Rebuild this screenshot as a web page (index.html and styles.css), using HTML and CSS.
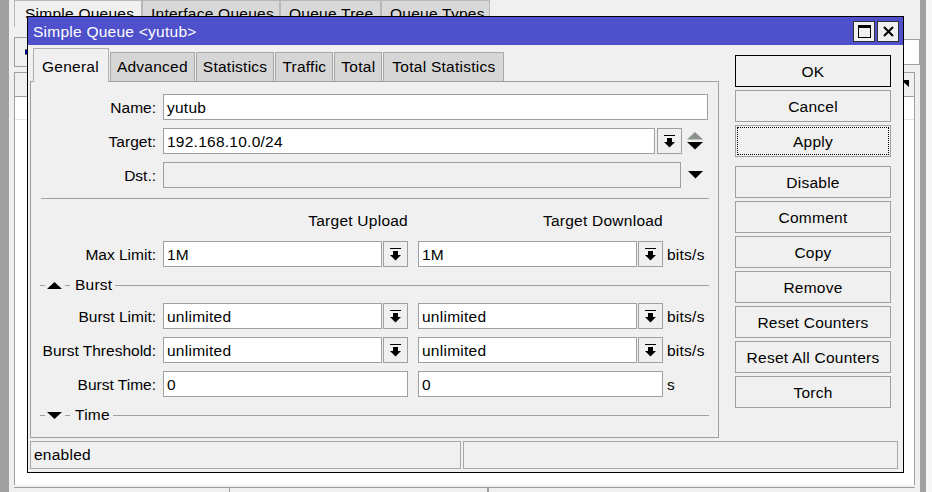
FILE: index.html
```html
<!DOCTYPE html>
<html>
<head>
<meta charset="utf-8">
<title>Simple Queue</title>
<link rel="stylesheet" href="styles.css">
</head>
<body>
<div class="desk">
  <div class="edge-left"></div>
  <div class="mainwin">
    <div class="mw-tabs">
      <div class="mw-tab active t-sq">Simple Queues</div>
      <div class="mw-tab t-iq">Interface Queues</div>
      <div class="mw-tab t-qt">Queue Tree</div>
      <div class="mw-tab t-qy">Queue Types</div>
    </div>
    <div class="mw-body">
      <div class="mw-toolbar">
        <div class="tb-btn">
          <svg width="14" height="14" viewBox="0 0 14 14"><path d="M5 0h4v5h5v4H9v5H5V9H0V5h5z" fill="#0000ff" stroke="#000" stroke-width="1"/></svg>
        </div>
        <div class="tb-fill"></div>
        <div class="tb-find"></div>
      </div>
      <div class="mw-list">
        <div class="mw-head">
          <svg class="corner" width="8" height="7" viewBox="0 0 8 7"><polygon points="0,0 8,0 8,7" fill="#000"/></svg>
        </div>
        <div class="mw-rows">
          <div class="mw-row"></div>
        </div>
      </div>
      <div class="mw-status">
        <div class="mst c1"></div>
        <div class="mst c2"></div>
        <div class="mst c3"></div>
      </div>
    </div>
  </div>
  <div class="edge-right"></div>
  <div class="edge-far"></div>
</div>

<div class="dialog">
  <div class="titlebar">
    <span class="title">Simple Queue &lt;yutub&gt;</span>
    <div class="tbtn">
      <svg width="13" height="13" viewBox="0 0 13 13"><rect x="0.5" y="0.5" width="12" height="12" fill="none" stroke="#000"/><rect x="0" y="0" width="13" height="3" fill="#000"/></svg>
    </div>
    <div class="tbtn">
      <svg width="11" height="11" viewBox="0 0 11 11"><path d="M1 1L10 10M10 1L1 10" stroke="#000" stroke-width="2"/></svg>
    </div>
  </div>
  <div class="dbody">
    <div class="dmain">
      <div class="leftcol">
        <div class="tabs">
          <div class="tab active">General</div>
          <div class="tab">Advanced</div>
          <div class="tab">Statistics</div>
          <div class="tab">Traffic</div>
          <div class="tab">Total</div>
          <div class="tab">Total Statistics</div>
        </div>
        <div class="panel">
          <div class="row">
            <label class="lbl">Name:</label>
            <div class="inp w-full">yutub</div>
          </div>
          <div class="row">
            <label class="lbl">Target:</label>
            <div class="inp w-target">192.168.10.0/24</div>
            <div class="ddbtn"><svg width="11" height="13" viewBox="0 0 11 13"><rect x="0" y="0" width="11" height="1"/><rect x="3" y="3" width="5" height="4"/><polygon points="0,7 11,7 5.5,12.5"/></svg></div>
            <svg class="updown" width="16" height="18" viewBox="0 0 16 18"><polygon points="0,7.5 16,7.5 8,0" fill="#8a928a"/><polygon points="0,10 16,10 8,17.5" fill="#000"/></svg>
          </div>
          <div class="row">
            <label class="lbl">Dst.:</label>
            <div class="inp dis w-dst"></div>
            <svg class="dstarrow" width="15" height="8" viewBox="0 0 15 8"><polygon points="0,0 15,0 7.5,7.5" fill="#000"/></svg>
          </div>
          <div class="sep"></div>
          <div class="row hdr">
            <div class="colhead">Target Upload</div>
            <div class="colhead">Target Download</div>
          </div>
          <div class="row">
            <label class="lbl">Max Limit:</label>
            <div class="combo"><div class="inp w-combo">1M</div><div class="ddbtn"><svg width="11" height="13" viewBox="0 0 11 13"><rect x="0" y="0" width="11" height="1"/><rect x="3" y="3" width="5" height="4"/><polygon points="0,7 11,7 5.5,12.5"/></svg></div></div>
            <div class="combo"><div class="inp w-combo">1M</div><div class="ddbtn"><svg width="11" height="13" viewBox="0 0 11 13"><rect x="0" y="0" width="11" height="1"/><rect x="3" y="3" width="5" height="4"/><polygon points="0,7 11,7 5.5,12.5"/></svg></div></div>
            <span class="unit">bits/s</span>
          </div>
          <div class="section">
            <span class="dash"></span>
            <svg class="stri" width="15" height="7" viewBox="0 0 15 7"><polygon points="0,7 15,7 7.5,0" fill="#000"/></svg>
            <span class="dash"></span>
            <span class="stitle">Burst</span>
            <span class="sline"></span>
          </div>
          <div class="row">
            <label class="lbl">Burst Limit:</label>
            <div class="combo"><div class="inp w-combo">unlimited</div><div class="ddbtn"><svg width="11" height="13" viewBox="0 0 11 13"><rect x="0" y="0" width="11" height="1"/><rect x="3" y="3" width="5" height="4"/><polygon points="0,7 11,7 5.5,12.5"/></svg></div></div>
            <div class="combo"><div class="inp w-combo">unlimited</div><div class="ddbtn"><svg width="11" height="13" viewBox="0 0 11 13"><rect x="0" y="0" width="11" height="1"/><rect x="3" y="3" width="5" height="4"/><polygon points="0,7 11,7 5.5,12.5"/></svg></div></div>
            <span class="unit">bits/s</span>
          </div>
          <div class="row">
            <label class="lbl">Burst Threshold:</label>
            <div class="combo"><div class="inp w-combo">unlimited</div><div class="ddbtn"><svg width="11" height="13" viewBox="0 0 11 13"><rect x="0" y="0" width="11" height="1"/><rect x="3" y="3" width="5" height="4"/><polygon points="0,7 11,7 5.5,12.5"/></svg></div></div>
            <div class="combo"><div class="inp w-combo">unlimited</div><div class="ddbtn"><svg width="11" height="13" viewBox="0 0 11 13"><rect x="0" y="0" width="11" height="1"/><rect x="3" y="3" width="5" height="4"/><polygon points="0,7 11,7 5.5,12.5"/></svg></div></div>
            <span class="unit">bits/s</span>
          </div>
          <div class="row">
            <label class="lbl">Burst Time:</label>
            <div class="inp w-col">0</div>
            <div class="inp w-col">0</div>
            <span class="unit">s</span>
          </div>
          <div class="section">
            <span class="dash"></span>
            <svg class="stri" width="15" height="7" viewBox="0 0 15 7"><polygon points="0,0 15,0 7.5,7" fill="#000"/></svg>
            <span class="dash"></span>
            <span class="stitle">Time</span>
            <span class="sline"></span>
          </div>
        </div>
      </div>
      <div class="btncol">
        <div class="btn default">OK</div>
        <div class="btn">Cancel</div>
        <div class="btn focus">Apply</div>
        <div class="btn group">Disable</div>
        <div class="btn">Comment</div>
        <div class="btn">Copy</div>
        <div class="btn">Remove</div>
        <div class="btn">Reset Counters</div>
        <div class="btn">Reset All Counters</div>
        <div class="btn">Torch</div>
      </div>
    </div>
    <div class="status">
      <div class="scell s1">enabled</div>
      <div class="scell s2"></div>
    </div>
  </div>
</div>
</body>
</html>
```

FILE: styles.css
```css
* { box-sizing: border-box; }
html, body { margin: 0; padding: 0; }
body {
  width: 932px;
  height: 492px;
  overflow: hidden;
  position: relative;
  background: #f0f0f0;
  font-family: "Liberation Sans", Arial, sans-serif;
  font-size: 15.5px;
  letter-spacing: 0.25px;
  color: #000;
}

/* ---------- background main window ---------- */
.desk { display: flex; height: 492px; }
.edge-left { width: 9px; background: #a0a0a0; }
.mainwin { width: 911px; display: flex; flex-direction: column; }
.mw-tabs { display: flex; height: 30px; padding-left: 5px; align-items: flex-start; }
.mw-tab {
  height: 27px;
  line-height: 26px;
  padding: 0 0 0 8px;
  background: #d8d8d8;
  border: 1px solid #b8b8b8;
  border-bottom: none;
  white-space: nowrap;
  overflow: hidden;
}
.mw-tab.active { background: #f0f0f0; padding-left: 10px; }
.t-sq { width: 128px; }
.t-iq { width: 138px; }
.t-qt { width: 101px; }
.t-qy { width: 109px; }
.mw-body { flex: 1; display: flex; flex-direction: column; margin-left: 5px; padding-right: 5px; }
.mw-toolbar { display: flex; height: 42px; padding-top: 7px; gap: 6px; }
.tb-btn {
  width: 36px; height: 30px;
  border: 1px solid #a0a0a0;
  display: flex; align-items: center; justify-content: center;
}
.tb-fill { flex: 1; }
.tb-find { width: 120px; height: 26px; margin-top: 2px; margin-right: -5px; background: #fff; border: 1px solid #a0a0a0; }
.mw-list { flex: 1; display: flex; flex-direction: column; border-left: 1px solid #a0a0a0; border-right: 1px solid #a0a0a0; }
.mw-head {
  height: 25px;
  border-top: 1px solid #a0a0a0;
  border-bottom: 1px solid #a0a0a0;
  background: #f0f0f0;
  display: flex; justify-content: flex-end; align-items: flex-start;
  padding: 7px 5px 0 0;
}
.mw-rows { flex: 1; background: #fff; }
.mw-row { height: 23px; border-bottom: 1px solid #e4e4e4; }
.mw-status { height: 5px; display: flex; border-top: 1px solid #a0a0a0; background: #f0f0f0; margin-top: 2px; }
.mst { height: 100%; border-right: 1px solid #a0a0a0; }
.mst.c1 { width: 216px; }
.mst.c2 { width: 258px; }
.edge-right { width: 6px; background: #a0a0a0; }
.edge-far { flex: 1; background: #f6f6f6; }

/* ---------- dialog ---------- */
.dialog {
  position: absolute;
  left: 27px;
  top: 16px;
  width: 877px;
  height: 457px;
  border: 1px solid #000;
  background: #f0f0f0;
  display: flex;
  flex-direction: column;
}
.titlebar {
  height: 28px;
  background: #4f50cc;
  color: #fff;
  display: flex;
  align-items: center;
  padding: 0 4px 0 5px;
}
.title { flex: 1; padding-top: 1px; }
.tbtn {
  width: 22px; height: 21px;
  margin-left: 2px;
  border: 1px solid #303030;
  background: #f0f0f0;
  display: flex; align-items: center; justify-content: center;
}
.dbody { flex: 1; display: flex; flex-direction: column; padding: 0 5px 3px 2px; }
.dmain { flex: 1; display: flex; }
.leftcol { width: 689px; display: flex; flex-direction: column; }

.tabs { height: 36px; display: flex; align-items: flex-end; padding-left: 3px; }
.tab {
  height: 29px;
  line-height: 28px;
  padding: 0 6px 0 6px;
  background: #d6d6d6;
  border: 1px solid #a8a8a8;
  border-bottom: none;
  margin-right: 1px;
  white-space: nowrap;
}
.tab:last-child { padding: 0 8px; }
.tab.active {
  height: 34px;
  padding: 4px 9px 0 8px;
  background: #f0f0f0;
  margin-bottom: -1px;
  position: relative;
  z-index: 1;
  border-color: #b0b0b0;
}
.panel {
  height: 357px;
  border: 1px solid #a0a0a0;
  padding-top: 12px;
  display: flex;
  flex-direction: column;
  gap: 8px;
}
.row { display: flex; align-items: center; height: 26px; flex: none; }
.lbl { width: 125px; margin-right: 7px; text-align: right; white-space: nowrap; padding-top: 2px; letter-spacing: 0; }
.inp {
  height: 26px;
  line-height: 24px;
  padding: 1px 0 0 3px;
  background: #fff;
  border: 1px solid #a0a0a0;
  white-space: nowrap;
  overflow: hidden;
}
.inp.dis { background: #f0f0f0; }
.w-full { width: 545px; }
.w-target { width: 492px; margin-right: 2px; }
.w-dst { width: 518px; margin-right: 7px; }
.w-col { width: 245px; margin-right: 10px; }
.w-combo { width: 219px; margin-right: 1px; }
.combo { display: flex; width: 245px; margin-right: 10px; }
.combo + .combo { margin-right: 4px; }
.w-col + .w-col { margin-right: 4px; }
.ddbtn {
  width: 25px; height: 26px;
  border: 1px solid #a0a0a0;
  background: #f0f0f0;
  display: flex; align-items: center; justify-content: center;
}
.ddbtn svg { fill: #000; }
.updown { margin-left: 5px; }
.unit { white-space: nowrap; padding-top: 2px; }

.sep { height: 1px; background: #a0a0a0; margin: 2px 9px 1px 10px; flex: none; }
.hdr { height: 25px; padding-left: 132px; }
.colhead { width: 245px; margin-right: 10px; text-align: right; padding-top: 1px; }

.section { display: flex; align-items: center; height: 20px; padding-left: 9px; padding-right: 9px; flex: none; }
.dash { width: 5px; height: 1px; background: #a0a0a0; }
.stri { margin: 0 3px 0 2px; }
.stitle { margin: 0 3px 0 5px; }
.sline { flex: 1; height: 1px; background: #a0a0a0; }

.btncol {
  width: 156px;
  margin-left: 16px;
  padding-top: 10px;
  display: flex;
  flex-direction: column;
  gap: 3px;
}
.btn {
  height: 32px;
  padding-top: 1px;
  border: 1px solid #a0a0a0;
  background: #f0f0f0;
  display: flex; align-items: center; justify-content: center;
  white-space: nowrap;
}
.btn.default { border-color: #000; }
.btn.focus { outline: 1px dotted #000; outline-offset: -3px; }
.btn.group { margin-top: 6px; }

.status { height: 28px; display: flex; gap: 2px; margin-top: 3px; }
.scell { height: 28px; border: 1px solid #a8a8a8; line-height: 26px; padding-left: 3px; }
.s1 { width: 431px; }
.s2 { flex: 1; }
```
